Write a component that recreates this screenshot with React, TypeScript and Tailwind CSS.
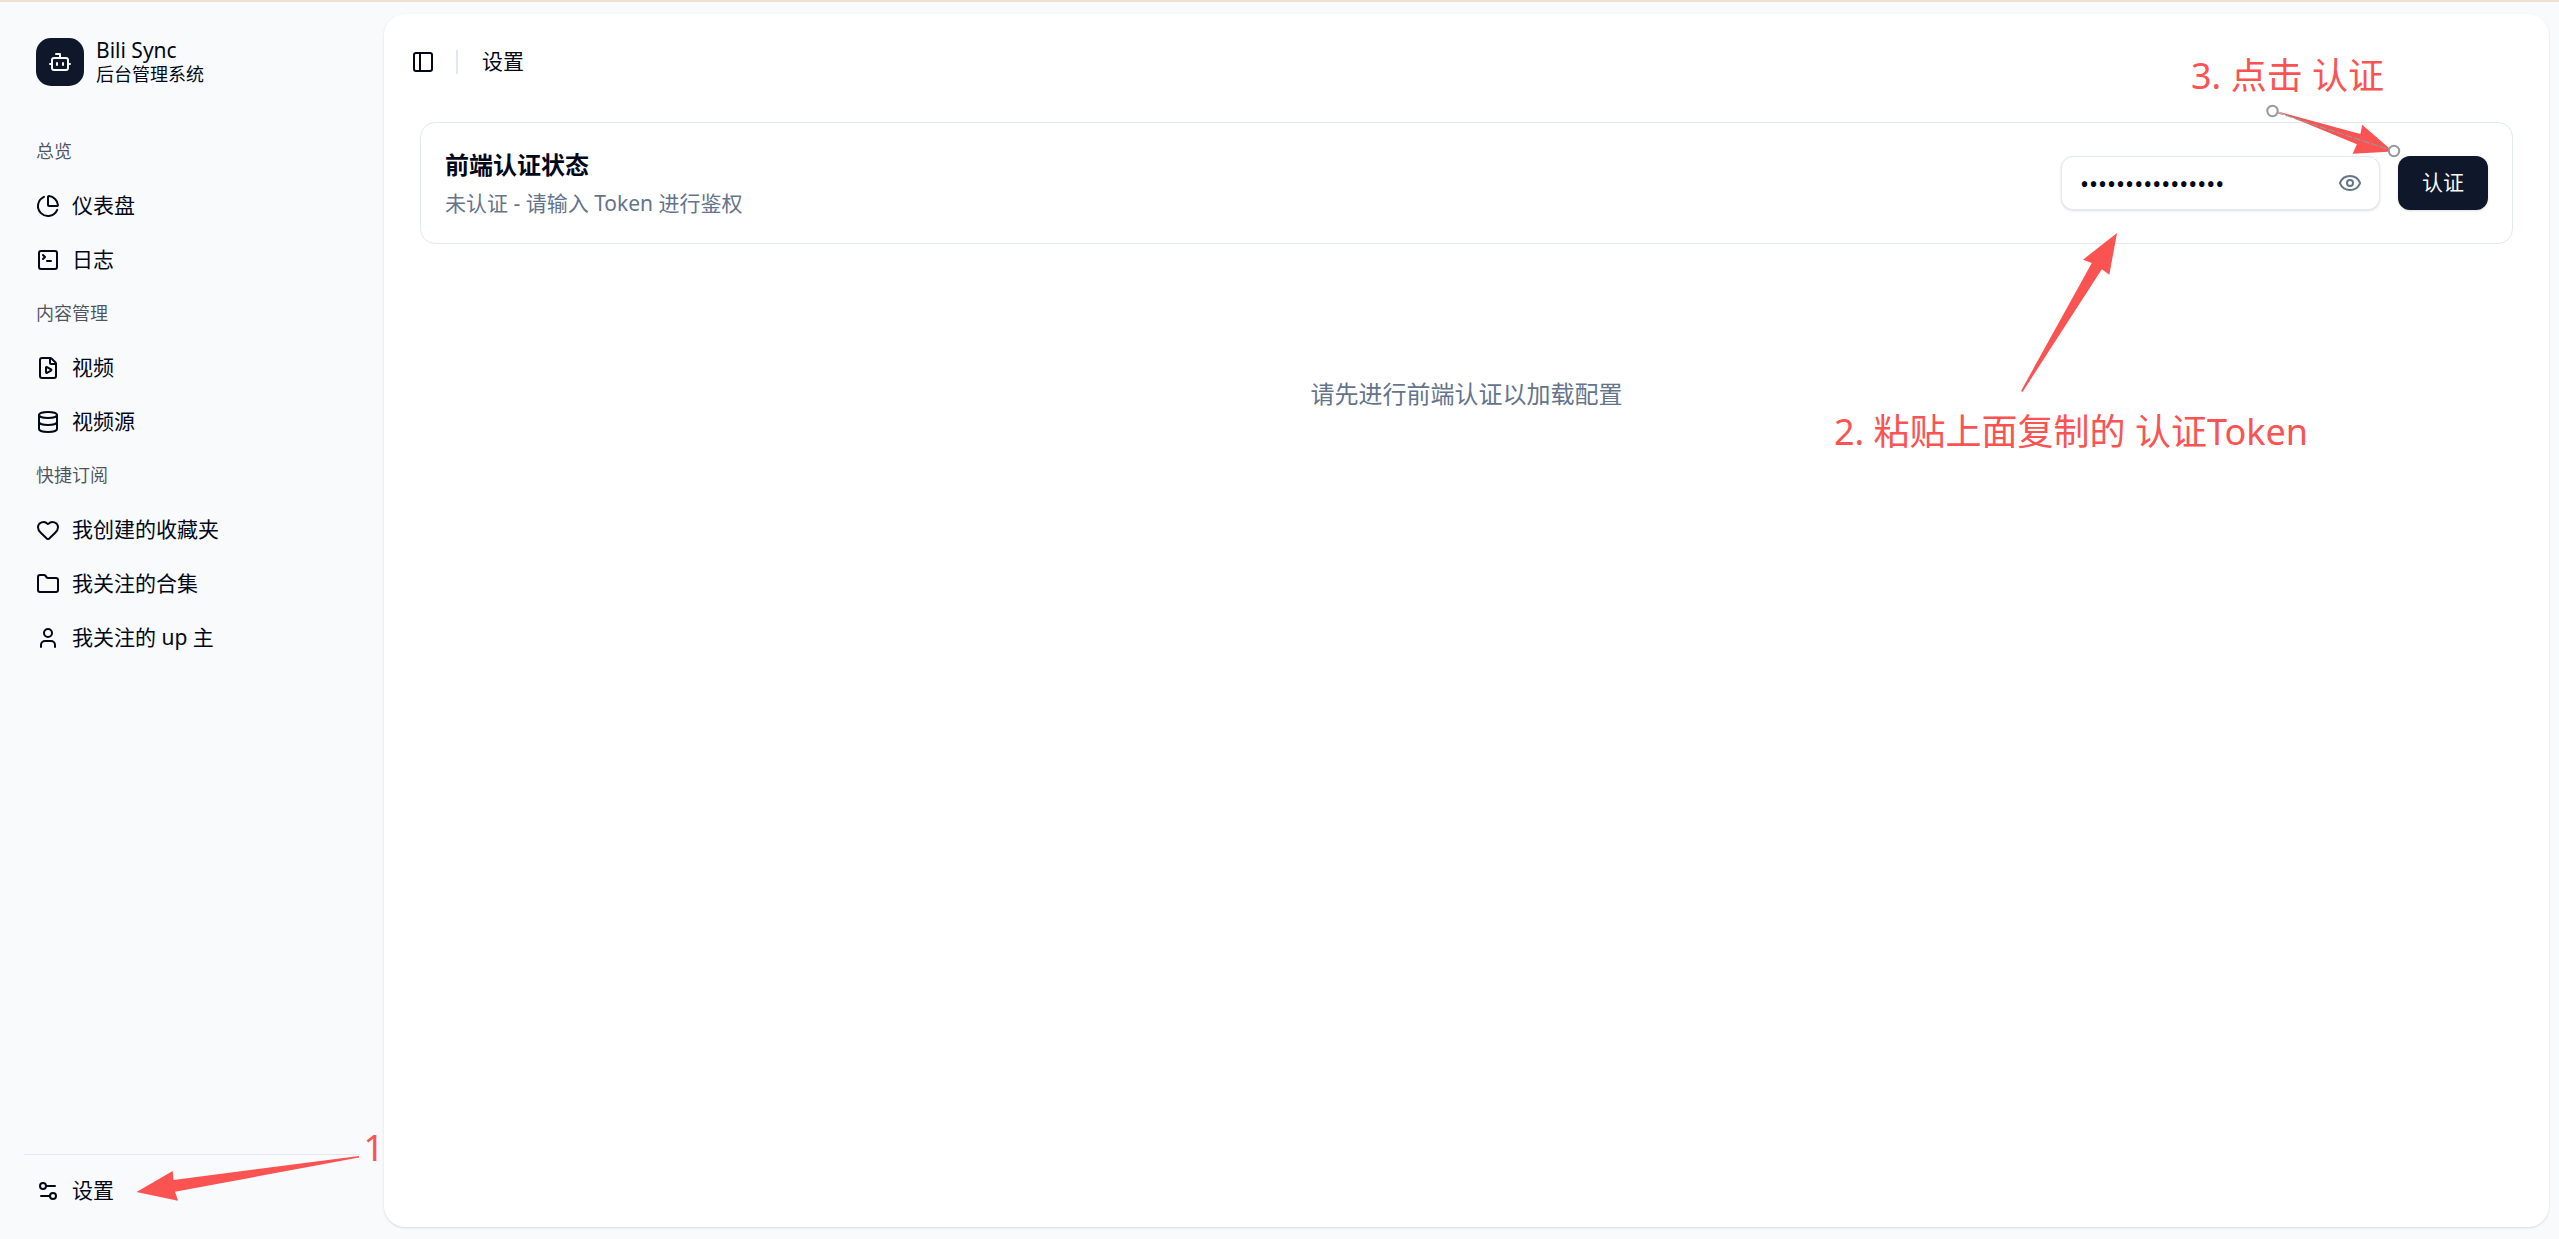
import { useState } from "react";
import {
  Bot,
  ChartPie,
  Database,
  Eye,
  EyeOff,
  FilePlay,
  Folder,
  Heart,
  PanelLeft,
  Settings2,
  SquareTerminal,
  User,
  type LucideIcon,
} from "lucide-react";

type NavItem = { label: string; icon: LucideIcon };
type NavGroup = { title: string; items: NavItem[] };

const groups: NavGroup[] = [
  {
    title: "总览",
    items: [
      { label: "仪表盘", icon: ChartPie },
      { label: "日志", icon: SquareTerminal },
    ],
  },
  {
    title: "内容管理",
    items: [
      { label: "视频", icon: FilePlay },
      { label: "视频源", icon: Database },
    ],
  },
  {
    title: "快捷订阅",
    items: [
      { label: "我创建的收藏夹", icon: Heart },
      { label: "我关注的合集", icon: Folder },
      { label: "我关注的 up 主", icon: User },
    ],
  },
];

function NavLink({ label, icon: Icon }: NavItem) {
  return (
    <a href="#" className="flex h-12 items-center gap-3 rounded-xl px-3 text-[21px] hover:bg-slate-100">
      <Icon size={24} className="shrink-0" />
      <span>{label}</span>
    </a>
  );
}

function Sidebar() {
  return (
    <aside className="relative flex w-96 shrink-0 flex-col px-6 pt-6 pb-3">
      <a href="#" className="flex h-[72px] items-center gap-3 px-3">
        <span className="flex size-12 items-center justify-center rounded-[15px] bg-[#0f172a] text-slate-50">
          <Bot size={24} />
        </span>
        <span className="flex flex-col">
          <span className="text-[21px] leading-6">Bili Sync</span>
          <span className="text-lg leading-6">后台管理系统</span>
        </span>
      </a>

      <nav className="mt-[30px] flex flex-1 flex-col gap-1.5">
        {groups.map((group) => (
          <div key={group.title} className="flex flex-col gap-1.5">
            <h2 className="flex h-12 items-center px-3 pb-0.5 text-lg text-[#020817]/70">{group.title}</h2>
            {group.items.map((item) => (
              <NavLink key={item.label} {...item} />
            ))}
          </div>
        ))}
      </nav>

      <div className="border-t border-slate-200 py-3">
        <NavLink label="设置" icon={Settings2} />
      </div>

      {/* step 1 */}
      <svg
        width="248"
        height="50"
        className="pointer-events-none absolute bottom-9 left-[136px] fill-[#fb5252]"
      >
        <path d="M0.5 39 L36.7 18 L37.5 27 L223 3 L223 4.5 L39 38.7 L42 47.7 Z" />
      </svg>
      <span className="pointer-events-none absolute right-0 bottom-[71px] text-4xl text-[#fb5252]">1</span>
    </aside>
  );
}

function TokenForm() {
  const [token, setToken] = useState("0123456789abcdef");
  const [visible, setVisible] = useState(false);

  return (
    <form className="flex items-center gap-[18px]" onSubmit={(e) => e.preventDefault()}>
      <div className="relative">
        <input
          type={visible ? "text" : "password"}
          aria-label="认证 Token"
          value={token}
          onChange={(e) => setToken(e.target.value)}
          className="h-[54px] w-[319px] rounded-xl border border-slate-200 bg-white pr-15 pl-[18px] text-2xl shadow-sm outline-none focus:border-slate-400"
        />
        <button
          type="button"
          aria-label="显示 Token"
          onClick={() => setVisible((v) => !v)}
          className="absolute inset-y-0 right-0 flex items-center px-[18px] text-[#64748b]"
        >
          {visible ? <EyeOff size={24} /> : <Eye size={24} />}
        </button>
      </div>
      <button type="submit" className="h-[54px] rounded-xl bg-[#0f172a] px-6 text-[21px] text-slate-50 shadow-sm">
        认证
      </button>
    </form>
  );
}

// steps 2 and 3, anchored to the right edge of the panel
function Annotations() {
  return (
    <div className="pointer-events-none absolute top-0 right-0 h-[460px] w-[749px] text-4xl text-[#fb5252]">
      <svg width="749" height="460" className="absolute inset-0 fill-[#fb5252]">
        <path d="M317 219 L283 245.7 L291.8 249 L221 377 L222.5 378 L301.8 255.3 L309.3 260.7 Z" />
        <path d="M593 137.5 L562.2 110.7 L560.4 120 L476 97 L556.9 130.3 L552.6 139.7 Z" />
        <path d="M477 98.5 L589 135.5" className="stroke-[#999]" strokeWidth="1.2" strokeDasharray="7 2" />
        <circle cx="472.5" cy="97" r="5.2" className="fill-white stroke-[#999]" strokeWidth="2" />
        <circle cx="594" cy="137" r="5.2" className="fill-white stroke-[#999]" strokeWidth="2" />
      </svg>
      <span className="absolute top-[42px] right-[165px] whitespace-nowrap">3. 点击 认证</span>
      <span className="absolute top-[398px] right-[241px] whitespace-nowrap">2. 粘贴上面复制的 认证Token</span>
    </div>
  );
}

export default function App() {
  return (
    <div className="flex min-h-screen border-t-2 border-[#f0e0d2] bg-slate-50 font-['Noto_Sans','Noto_Sans_CJK_SC',sans-serif] text-[#020817]">
      <Sidebar />
      <main className="relative mt-3 mr-2.5 mb-3 flex-1 rounded-[21px] bg-white shadow-sm">
        <header className="flex h-24 items-center px-[27px]">
          <button type="button" aria-label="切换侧边栏">
            <PanelLeft size={24} />
          </button>
          <div className="mr-6 ml-[21px] h-6 w-0.5 bg-slate-200" />
          <h1 className="text-[21px]">设置</h1>
        </header>

        <div className="px-9 pt-3">
          <section className="flex items-center justify-between rounded-[15px] border border-slate-200 px-6 py-[22px]">
            <div>
              <h2 className="text-2xl leading-10 font-bold">前端认证状态</h2>
              <p className="text-[21px] leading-9 text-[#64748b]">未认证 - 请输入 Token 进行鉴权</p>
            </div>
            <TokenForm />
          </section>
          <p className="mt-[132px] text-center text-2xl leading-9 text-[#64748b]">请先进行前端认证以加载配置</p>
        </div>

        <Annotations />
      </main>
    </div>
  );
}
